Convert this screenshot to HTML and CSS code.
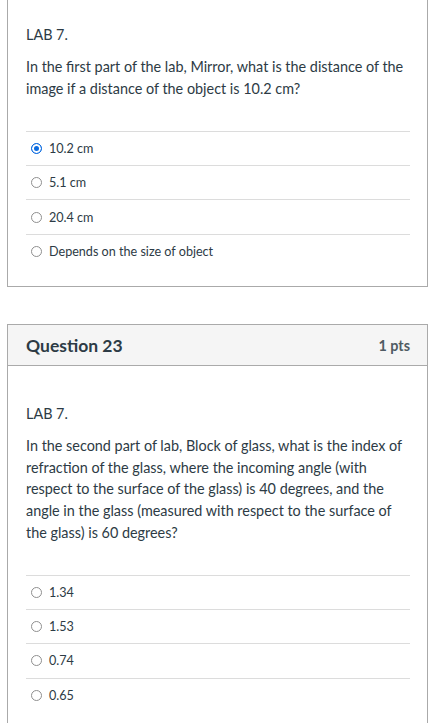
FILE: index.html
```html
<!DOCTYPE html>
<html>
<head>
<meta charset="utf-8">
<link rel="stylesheet" href="styles.css">
</head>
<body>
<div class="page">
  <div class="card card-cut">
    <div class="body body-cut">
      <div class="qtext">
        <p>LAB 7.</p>
        <p>In the first part of the lab, Mirror, what is the distance of the image if a distance of the object is 10.2 cm?</p>
      </div>
      <div class="answers">
        <div class="answer"><span class="radio checked"></span><span class="label">10.2 cm</span></div>
        <div class="answer"><span class="radio"></span><span class="label">5.1 cm</span></div>
        <div class="answer"><span class="radio"></span><span class="label">20.4 cm</span></div>
        <div class="answer"><span class="radio"></span><span class="label">Depends on the size of object</span></div>
      </div>
    </div>
  </div>

  <div class="card">
    <div class="header">
      <span class="name">Question 23</span>
      <span class="pts">1 pts</span>
    </div>
    <div class="body">
      <div class="qtext">
        <p>LAB 7.</p>
        <p>In the second part of lab, Block of glass, what is the index of refraction of the glass, where the incoming angle (with respect to the surface of the glass) is 40 degrees, and the angle in the glass (measured with respect to the surface of the glass) is 60 degrees?</p>
      </div>
      <div class="answers">
        <div class="answer"><span class="radio"></span><span class="label">1.34</span></div>
        <div class="answer"><span class="radio"></span><span class="label">1.53</span></div>
        <div class="answer"><span class="radio"></span><span class="label">0.74</span></div>
        <div class="answer"><span class="radio"></span><span class="label">0.65</span></div>
      </div>
    </div>
  </div>
</div>
</body>
</html>
```

FILE: styles.css
```css
* { box-sizing: border-box; }

html, body {
  margin: 0;
  padding: 0;
  background: #fff;
}

body {
  font-family: Lato, "Noto Sans", "Liberation Sans", sans-serif;
  color: #2d3b45;
  overflow: hidden;
}

.page {
  padding: 0 5px 0 7px;
  display: flex;
  flex-direction: column;
  gap: 37px;
}

.card {
  border: 1px solid #aaaaaa;
  background: #fff;
}

.card-cut {
  border-top: none;
}

.header {
  background: #f5f5f5;
  border-bottom: 1px solid #aaaaaa;
  height: 41px;
  padding: 0 17px 0 18px;
  display: flex;
  align-items: center;
  justify-content: space-between;
}

.name {
  font-weight: 700;
  font-size: 17.5px;
  color: #2d3b45;
}

.pts {
  font-weight: 700;
  font-size: 14.4px;
  color: #4f5b63;
}

.body {
  padding: 26px 17px 18px 18px;
}

.body-cut {
  padding-top: 13px;
}

.qtext {
  font-size: 14.4px;
  line-height: 21.6px;
}

.qtext p {
  margin: 10.8px 0;
}

.answers {
  margin-top: 31.5px;
}

.answer {
  border-top: 1px solid #dcdcdc;
  height: 34.3px;
  display: flex;
  align-items: center;
  padding-left: 5px;
  gap: 7px;
  font-size: 12.6px;
}

.radio {
  width: 11px;
  height: 11px;
  border-radius: 50%;
  border: 1px solid #8f8f8f;
  background: #fff;
  flex: none;
}

.radio.checked {
  border: 1.5px solid #0b6be0;
  background: #0b6be0;
  box-shadow: inset 0 0 0 2px #fff;
}

.label {
  color: #2d3b45;
}
```
